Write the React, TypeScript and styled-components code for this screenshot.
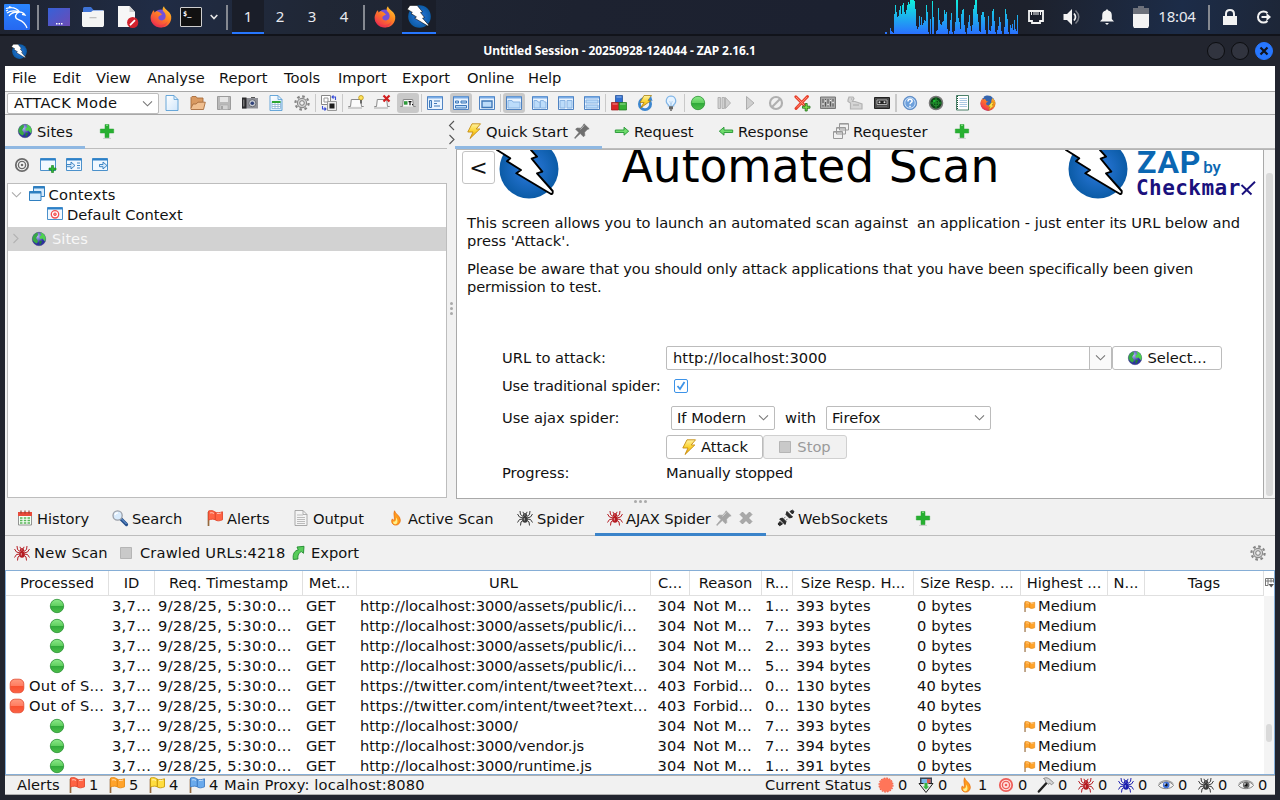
import React from "react";
import styled, { createGlobalStyle, css } from "styled-components";

const GlobalStyle = createGlobalStyle`
  * { box-sizing: border-box; }
  body { margin: 0; background: #22252f; overflow: hidden; }
  button { font: inherit; color: inherit; padding: 0; }
  svg { display: block; flex: none; overflow: visible; }
`;

const Desktop = styled.div`
  width: 1280px;
  height: 800px;
  display: flex;
  flex-direction: column;
  background: #22252f;
  font-family: "DejaVu Sans", sans-serif;
  font-size: 14.67px;
  color: #111;
  overflow: hidden;
  white-space: pre;
`;

/* ---------- icons ---------- */

type IconProps = { size?: number };
const Svg = ({ size = 16, box = 16, children }: { size?: number; box?: number; children: React.ReactNode }) => (
  <svg width={size} height={size} viewBox={`0 0 ${box} ${box}`} fill="none">
    {children}
  </svg>
);

const Defs = styled.svg`
  position: absolute;
  width: 0;
  height: 0;
`;

const Gradients = () => (
  <Defs aria-hidden>
    <defs>
      <linearGradient id="gKali" x1="0" y1="0" x2="0" y2="1"><stop offset="0" stopColor="#2a86ff" /><stop offset="1" stopColor="#2668f0" /></linearGradient>
      <linearGradient id="gDisp" x1="0" y1="0" x2="1" y2="1"><stop offset="0" stopColor="#3661d8" /><stop offset="1" stopColor="#6c4bb5" /></linearGradient>
      <radialGradient id="gZap"><stop offset="0" stopColor="#2d7be0" /><stop offset="1" stopColor="#0b5ba6" /></radialGradient>
      <linearGradient id="gFox" x1="1" y1="0" x2="0.3" y2="1"><stop offset="0" stopColor="#ffd83b" /><stop offset=".45" stopColor="#ff8a1f" /><stop offset="1" stopColor="#f0324f" /></linearGradient>
      <linearGradient id="gGreen" x1="0" y1="0" x2="0" y2="1"><stop offset="0" stopColor="#8ce98a" /><stop offset=".5" stopColor="#5fce5e" /><stop offset=".51" stopColor="#2fa93a" /><stop offset="1" stopColor="#4fc04c" /></linearGradient>
      <linearGradient id="gRed" x1="0" y1="0" x2="0" y2="1"><stop offset="0" stopColor="#ff9a80" /><stop offset=".5" stopColor="#ff7c60" /><stop offset=".51" stopColor="#f8502f" /><stop offset="1" stopColor="#fb6145" /></linearGradient>
      <linearGradient id="gBolt" x1="0" y1="0" x2="0" y2="1"><stop offset="0" stopColor="#fff3a0" /><stop offset=".5" stopColor="#fbd22e" /><stop offset="1" stopColor="#f0a500" /></linearGradient>
      <linearGradient id="gGraph" x1="0" y1="0" x2="0" y2="34" gradientUnits="userSpaceOnUse"><stop offset="0" stopColor="#0ff0dc" /><stop offset="1" stopColor="#2a70ff" /></linearGradient>
      <radialGradient id="gGlobe" cx=".4" cy=".3"><stop offset="0" stopColor="#b4b8f4" /><stop offset="1" stopColor="#2c2fa0" /></radialGradient>
      <linearGradient id="gPage" x1="0" y1="0" x2="1" y2="1"><stop offset="0" stopColor="#ffffff" /><stop offset="1" stopColor="#cfe6fb" /></linearGradient>
    </defs>
  </Defs>
);

const Globe = ({ size = 16 }: IconProps) => (
  <Svg size={size}>
    <circle cx="8" cy="8" r="6.700" fill="url(#gGlobe)" stroke="#4a4a86" strokeWidth=".6" />
    <path d="M1.500 7C2 4.600 4 2 6.500 1.600L7 4 5 7l2 3-1 2.500C3.500 12 1.300 9.500 1.500 7z" fill="#36a944" />
    <path d="M9 1.400c3 .2 5.500 2.600 5.700 6L14 10.500 11.500 7.500 9 8 8.500 5.500 10.500 4z" fill="#4fd250" />
    <path d="M8.500 9.500l2.500.5-1 3-1.500 1z" fill="#217a3a" />
  </Svg>
);
const Plus = () => (
  <Svg>
    <path d="M6 1.500h4V6h4.700v4H10v4.700H6V10H1.300V6H6z" fill="#27b030" stroke="#2ba135" strokeWidth=".5" />
    <path d="M7 2.300h2" stroke="#8ee58e" />
    <path d="M4 15.400h8" stroke="#bbb" strokeWidth=".7" />
  </Svg>
);
const Bolt = ({ size = 16 }: IconProps) => (
  <Svg size={size}>
    <path d="M6 .8h8.500L10.200 6h3.600L4 15.500 7 9H1.800z" fill="url(#gBolt)" stroke="#c58c12" strokeWidth=".9" strokeLinejoin="round" />
  </Svg>
);
const Pin = ({ tone }: { tone: string }) => (
  <Svg>
    <path d="M10 .8l5.200 5-2 .8-2.600 2.600.2 3.300-1.300 1.300L6.300 10.500 1 15.500l-.5-.6L5 9.500 1.600 6.300 3 5l3.500.2L9 2.800z" fill={tone} stroke={tone} strokeWidth=".6" />
    <path d="M10.200 2.500L6.500 6.500" stroke="#fff" strokeOpacity=".5" />
  </Svg>
);
const Cross = () => (
  <Svg>
    <path d="M2 4.500L4.500 2 8 5.500 11.500 2 14 4.500 10.500 8 14 11.500 11.500 14 8 10.500 4.500 14 2 11.500 5.500 8z" fill="#a9a9a9" stroke="#939393" strokeWidth=".7" />
  </Svg>
);
const Arrow = ({ left }: { left?: boolean }) => (
  <Svg>
    <path transform={left ? "translate(16 0) scale(-1 1)" : undefined} d="M1.300 7H10V4.200L14.700 8.200 10 12.200V9.500H1.300z" fill="#6fdc6c" stroke="#249433" strokeWidth=".9" strokeLinejoin="round" />
  </Svg>
);
const Windows = ({ gray }: { gray?: boolean }) => {
  const c = gray ? "#999" : "#2f7fc0";
  const f = gray ? "#f1f1f1" : "#d8ebfc";
  return (
    <Svg>
      {gray ? (
        <>
          <path d="M6.500.5h9v6.500h-9zM3.500 4.500h9V11h-9zM.5 8.500h9v7h-9z" fill={f} stroke={c} />
          <path d="M6.500 1.500h9M3.500 5.500h9M.5 9.500h9" stroke={c} strokeOpacity=".6" />
        </>
      ) : (
        <>
          <path d="M4.500.5h11v10h-11z" fill={f} stroke={c} />
          <path d="M4.500 1.500h11" stroke={c} strokeWidth="2" />
          <path d="M.5 5.500h11.500v9H.5z" fill={f} stroke={c} />
          <path d="M.5 6.500H12" stroke={c} strokeWidth="2" />
        </>
      )}
    </Svg>
  );
};
const Win = ({ kind }: { kind: "plus" | "in" | "out" | "target" }) => (
  <Svg>
    <path d="M.5 1.500h15v12H.5z" fill="#f1f8ff" stroke="#4b91cb" />
    <path d="M.5 2.500h15" stroke="#2c80c8" strokeWidth="2" />
    {kind === "plus" && <path d="M11.500 8.500h2v2.500H16v2h-2.500v2.500h-2V13H9v-2h2.500z" fill="#2db834" stroke="#13781c" strokeWidth=".6" />}
    {kind === "in" && <path d="M.5 7.500h4.500V5l4 3.500-4 3.500V9.700H.5zM11 6h3M11 8.500h3M11 11h3" fill="#d4e8fb" stroke="#2f7cbd" strokeWidth=".9" />}
    {kind === "out" && <path d="M7.500 7.500h3.500V5l4 3.500-4 3.500V9.700H7.500z" fill="#d4e8fb" stroke="#2f7cbd" strokeWidth=".9" />}
    {kind === "target" && (
      <>
        <circle cx="8" cy="8.300" r="3.700" fill="#fff" stroke="#f25050" strokeWidth="1.300" />
        <circle cx="8" cy="8.300" r="1.400" fill="#f77" stroke="#e84646" strokeWidth=".7" />
      </>
    )}
  </Svg>
);
const Target = ({ tone, fill = "#f6f6f6" }: { tone: string; fill?: string }) => (
  <Svg>
    <circle cx="8" cy="8" r="6.200" fill={fill} stroke={tone} strokeWidth="1.800" />
    <circle cx="8" cy="8" r="3.600" stroke={tone} strokeWidth="1.400" />
    <circle cx="8" cy="8" r="1.300" fill={tone} />
  </Svg>
);
const Page = ({ kind }: { kind?: "lines" | "sheet" | "note" }) => (
  <Svg>
    <path d={kind === "note" ? "M2.500.5h12v14.500h-12z" : "M2 .5h8l4 4V15.500H2z"} fill={kind === "lines" ? "#f4f4f4" : kind === "note" ? "#fff" : "url(#gPage)"} stroke={kind === "lines" ? "#a0a0a0" : kind === "note" ? "#39745a" : "#5a9fd6"} strokeWidth=".9" />
    {kind !== "note" && <path d="M10 .5v4h4" stroke={kind === "lines" ? "#a0a0a0" : "#5a9fd6"} strokeWidth=".8" />}
    {kind === "lines" && <path d="M4 5h6M4 7.500h8M4 9.500h8M4 11.500h8M4 13.500h8" stroke="#bbb" />}
    {kind === "note" && <path d="M5.500 3.500h7.500M5.500 5.500h7.500M5.500 7.500h7.500M5.500 9.500h7.500M5.500 11.500h7.500" stroke="#a9c8e2" />}
    {kind === "note" && <path d="M3.500 1v14" stroke="#1e5538" strokeDasharray="1 1" />}
    {kind === "sheet" && (
      <>
        <path d="M4 6.500h8.500v7H4z" fill="#fff" stroke="#7aa9d0" strokeWidth=".7" />
        <path d="M4 7h8.500" stroke="#2ea632" strokeWidth="2" />
        <path d="M4 9.500h8.500M4 11.500h8.500M7 8v5.500M10 8v5.500" stroke="#8fb4cf" strokeWidth=".8" />
      </>
    )}
  </Svg>
);
const FolderOpen = () => (
  <Svg>
    <path d="M1 13V2.500l1-1h4l1 1.500h6v4" fill="#d99a62" stroke="#a86d3d" strokeWidth=".9" />
    <path d="M.8 13.500L3 9h3l2-1.800h7.300L13.500 14.500H1z" fill="#f0bf90" stroke="#a86d3d" strokeWidth=".9" strokeLinejoin="round" />
  </Svg>
);
const Floppy = () => (
  <Svg>
    <path d="M1.500 1.500h13v13h-13z" fill="#b9b9b9" stroke="#9c9c9c" />
    <path d="M4 2h8v5H4z" fill="#e6e6e6" />
    <path d="M4 10h8v4.500H4z" fill="#d3d3d3" stroke="#aaa" strokeWidth=".6" />
    <path d="M6 11v3" stroke="#999" strokeWidth="1.600" />
  </Svg>
);
const Camera = () => (
  <Svg>
    <path d="M0 3h16v10.500H0z" fill="#8f9096" />
    <path d="M0 2.500h4.500v11H0z" fill="#2a2a2d" />
    <path d="M1.800 4.500v7" stroke="#999" />
    <path d="M9 2h4v1H9z" fill="#555" />
    <circle cx="10.300" cy="8.200" r="3.600" fill="#c9ccd2" stroke="#60636a" strokeWidth=".9" />
    <circle cx="10.300" cy="8.200" r="1.800" fill="#30427a" />
  </Svg>
);
const Gear = () => (
  <Svg>
    <circle cx="8" cy="8" r="6.600" stroke="#858585" strokeWidth="2.200" strokeDasharray="2.600 2.580" />
    <circle cx="8" cy="8" r="4.600" fill="#d4d4d4" stroke="#8a8a8a" strokeWidth="1.100" />
    <circle cx="8" cy="8" r="2.300" fill="#f1f1f1" stroke="#7d7d7d" />
  </Svg>
);
const Swap = () => (
  <Svg>
    <path d="M.5.500h9v9h-9z" fill="#fff" stroke="#888" />
    <path d="M3 3h4v4H3z" stroke="#999" />
    <path d="M6.500 6.500h9v9h-9z" fill="#ededed" stroke="#999" />
    <path d="M8.500 8.500h5v5h-5z" fill="#1c1c1c" />
    <path d="M14.500 5V2H11M12.500.5L11 2l1.500 1.500M1.500 11v3H5M3.500 12.500L5 14l-1.500 1.500" stroke="#3a4fd8" strokeWidth="1.100" />
  </Svg>
);
const Tab = ({ kind }: { kind: "bulb" | "x" | "text" }) => (
  <Svg>
    <path d="M.3 11.500H2.500L3.300 4.500h9.400l.8 7h2.200" stroke="#8a8a8a" fill="#fbfbfb" />
    {kind !== "text" && <path d="M0 13h14" stroke="#aaa" />}
    {kind === "bulb" && (
      <>
        <circle cx="13" cy="2.800" r="2.300" fill="#ffe25c" stroke="#b89312" strokeWidth=".8" />
        <path d="M13 5v3.500" stroke="#555" strokeWidth="1.600" />
      </>
    )}
    {kind === "x" && <path d="M9.500.500l6 6M15.500.500l-6 6" stroke="#d11f1f" strokeWidth="2.200" />}
    {kind === "text" && (
      <>
        <path d="M4 6.200h3.500v3.500H4z" fill="#2f9a3c" />
        <path d="M8.500 6.700h3M10 6.700V10.200M12 9.700h1" stroke="#111" strokeWidth="1.200" />
      </>
    )}
  </Svg>
);
const paneShapes: Record<string, string> = {
  side: "M2.500 5.500h2v7h-2zM7 6h6M7 8.500h3M7 11h6",
  stack: "M2.500 6h3v2h-3zM8 6h5.500v2H8zM2.500 10.500h11v2.500h-11z",
  full: "M3 6h10v6.500H3z",
  tab: "M2 5.500h4l1 1.500h7v6H2z",
  tabs: "M2 5.500h3l1 1.500h2v6H2zM8.500 5.500h3l1 1.500h1.500v6H8.500z",
  cols: "M2 5.500h5v7.500H2zM9 5.500h5v7.500H9z",
  rows: "M2 5h12v3H2zM2 10h12v3H2z",
};
const Pane = ({ kind }: { kind: string }) => (
  <Svg>
    <path d="M.5 1.500h15v13H.5z" fill="#e9f4ff" stroke="#4f83c2" />
    <path d="M1 2.500h14" stroke="#79abe4" strokeWidth="2" />
    <path d={paneShapes[kind]} fill="#bcdcfa" stroke={kind === "full" || kind === "stack" || kind === "side" ? "#3f78b8" : "#8ab4e2"} strokeWidth={kind === "full" ? 1.400 : 1} />
  </Svg>
);
const Blocks = () => (
  <Svg>
    <path d="M4.500.500h7v7h-7z" fill="#2f6fd0" stroke="#1a4890" strokeWidth=".7" />
    <path d="M.5 7.500h7v7.500h-7z" fill="#d92525" stroke="#961414" strokeWidth=".7" />
    <path d="M8 7.500h7.500v7.500H8z" fill="#35b035" stroke="#187418" strokeWidth=".7" />
    <path d="M1.500 9h5M9 9h5.500M5.500 2h5" stroke="#fff" strokeOpacity=".5" />
  </Svg>
);
const BoltSync = () => (
  <Svg>
    <circle cx="8" cy="9" r="5.600" stroke="#3b86cf" strokeWidth="2.800" />
    <path d="M7 .5h7.500L11 5.500h3L3.500 13 7 7.500H3z" fill="url(#gBolt)" stroke="#a98213" strokeWidth=".8" />
    <path d="M14 1l1.500 5-4-1z" fill="#3b86cf" />
  </Svg>
);
const Bulb = () => (
  <Svg>
    <path d="M8 1a4.800 4.800 0 0 0-2.700 8.700V11h5.400V9.700A4.800 4.800 0 0 0 8 1z" fill="#e6f3ff" stroke="#7fb4e6" strokeWidth="1.200" />
    <path d="M6.700 6L8 10l1.300-4" stroke="#9fc6ea" strokeWidth=".7" />
    <path d="M6 12h4M6 13.500h4M7 15.200h2" stroke="#666" strokeWidth="1.300" />
  </Svg>
);
const Ball = ({ red }: { red?: boolean }) => (
  <Svg>
    {red ? (
      <rect x="1.200" y="1.200" width="13.600" height="13.600" rx="4.600" fill="url(#gRed)" stroke="#e2482c" strokeWidth=".8" />
    ) : (
      <circle cx="8" cy="8" r="6.700" fill="url(#gGreen)" stroke="#2a9233" strokeWidth=".8" />
    )}
  </Svg>
);
const StepIcon = () => (
  <Svg>
    <path d="M2 2.500h2.500v11H2zM6 2.500h2.500v11H6zM9.500 2.500L14.500 8l-5 5.500z" fill="#d0d0d0" stroke="#a8a8a8" strokeWidth=".8" />
  </Svg>
);
const PlayIcon = () => (
  <Svg>
    <path d="M4.500 1.500L12 8l-7.500 6.500z" fill="#cfcfcf" stroke="#a8a8a8" strokeWidth=".9" />
  </Svg>
);
const NoIcon = () => (
  <Svg>
    <circle cx="8" cy="8" r="6" stroke="#b0b0b0" strokeWidth="2.200" />
    <path d="M4 12L12 4" stroke="#b0b0b0" strokeWidth="2.200" />
  </Svg>
);
const BreakAdd = () => (
  <Svg>
    <path d="M1.800 1.800l11 11M13.500 1.500L2 13.500" stroke="#e8402c" strokeWidth="3" strokeLinecap="round" />
    <path d="M2 2l10 10M13 2L3 12.500" stroke="#ff8c74" strokeWidth="1" />
    <path d="M11.200 8.500h2v2.700H16v2h-2.800V16h-2v-2.800H8.500v-2h2.700z" fill="#7be04c" stroke="#1b6e14" strokeWidth=".8" />
  </Svg>
);
const Mixer = () => (
  <Svg>
    <path d="M.5 2h15v11.500H.5z" fill="#a8a8a8" stroke="#777" />
    <path d="M3 4v7.500M5.500 4v7.500M8 4v7.500M10.500 4v7.500M13 4v7.500" stroke="#444" strokeWidth=".8" />
    <path d="M2.300 9h1.500M4.800 6h1.500M7.300 9.500h1.500M9.800 5.500h1.500M12.300 7.500h1.500" stroke="#f5f5f5" strokeWidth="1.400" />
  </Svg>
);
const Sheep = () => (
  <Svg>
    <path d="M1 5l1-3h4l1 1.500-1.500 3H8L15 9v5H3.500V8L1 6.500z" fill="#d5d5d5" stroke="#b3b3b3" strokeWidth="1.200" />
    <path d="M4 4h1M6 10h6" stroke="#a8a8a8" />
  </Svg>
);
const Cassette = () => (
  <Svg>
    <path d="M.5 2.500h15v11H.5z" fill="#4a4a4a" stroke="#222" />
    <path d="M3 5h10v4.500H3z" fill="#222" stroke="#bbb" strokeWidth=".9" />
    <circle cx="5.500" cy="7.200" r="1" fill="#ddd" />
    <circle cx="10.500" cy="7.200" r="1" fill="#ddd" />
    <path d="M3 11.500h10" stroke="#666" />
  </Svg>
);
const HelpIcon = () => (
  <Svg>
    <circle cx="8" cy="8" r="6.700" fill="#6da0dc" stroke="#4a78b5" strokeWidth=".7" />
    <circle cx="8" cy="8" r="5.200" stroke="#d4e5f8" strokeWidth=".9" />
    <path d="M6 6.400C6 5 7 4.300 8 4.300s2.100.6 2.100 1.900C10.100 7.500 8 7.600 8 9.300M8 10.800v1.400" stroke="#fff" strokeWidth="1.500" />
  </Svg>
);
const Radar = () => (
  <Svg>
    <circle cx="8" cy="8" r="6.500" fill="#0d4a18" stroke="#777" strokeWidth="1.600" />
    <path d="M8 2.500v11M2.500 8h11" stroke="#29a835" strokeWidth=".8" />
    <circle cx="8" cy="8" r="3" stroke="#29a835" strokeWidth=".7" />
    <circle cx="6.300" cy="6" r="1.300" fill="#1fbd32" />
  </Svg>
);
const Firefox = ({ size = 22, bolt }: { size?: number; bolt?: boolean }) => (
  <Svg size={size} box={22}>
    <circle cx="11" cy="11.500" r={bolt ? 10 : 8} fill={bolt ? "#3767b2" : "#7350d8"} />
    <path d="M1.500 8C2.300 6 3 5 4 4.300L4.500 6.500 6.800 5 9.500 6.300 12 8.500 9 10.300c-1 .8-.8 2.500.5 3.500 2 1.300 4.800.5 5.700-1.500C16.500 9.500 15 6.500 13 5c-.8-1.500-.3-3.500 1-4.800.3 2 1.500 2.800 3.500 4.500C20.500 7 21.700 9.500 21.200 13c-.8 5-5 8.500-10 8.500C5 21.500.5 17 .6 11.500c0-1.300.3-2.500.9-3.500z" fill="url(#gFox)" />
    <path d="M1 11c1 5 4.500 8 9 8 3.500 0 6-1.500 7.500-4-1 5-4.500 6.500-7.500 6.500C4.500 21.500.8 17 1 11z" fill="#e52f4d" fillOpacity=".45" />
    {bolt && <path d="M5 2.500c4-3 10-2 12 1l-2 6-6-1z" fill="#3565ae" />}
    {bolt && <path d="M16 10l-5 6h3l-2 5 8-7h-3.500l3-4z" fill="#ffe04a" stroke="#a87400" strokeWidth=".6" />}
  </Svg>
);
const Calendar = () => (
  <Svg>
    <path d="M1.500 3h13v12h-13z" fill="#f5fff5" stroke="#888" strokeWidth=".9" />
    <path d="M1 2h14v4H1z" fill="#e84b3b" />
    <path d="M4 .5v3M8 .5v3M12 .5v3" stroke="#8d3a2d" strokeWidth="1.100" />
    <path d="M3 8h2.500M6.800 8h2.500M10.500 8H13M3 10.500h2.500M6.800 10.500h2.500M10.500 10.500H13M3 13h2.500M6.800 13h2.500M10.500 13H13" stroke="#57b558" strokeWidth="1.600" />
  </Svg>
);
const Magnifier = () => (
  <Svg>
    <path d="M9 9l5.500 5.500" stroke="#244f8c" strokeWidth="3.200" strokeLinecap="round" />
    <path d="M9.500 9l5 5" stroke="#78a9e4" strokeWidth="1" />
    <circle cx="5.600" cy="5.500" r="4.600" fill="#d9ebfc" stroke="#9a9fa8" strokeWidth="1.300" />
    <path d="M3 5c.3-1.500 1.500-2.300 3-2.200" stroke="#fff" strokeWidth="1.300" />
  </Svg>
);
const flagTones = { red: ["#ff6344", "#e2492f"], orange: ["#ffa32b", "#e58a14"], yellow: ["#ffdd3f", "#c79a08"], blue: ["#6aaaec", "#3f7dc4"] };
const Flag = ({ tone, size = 16 }: { tone: keyof typeof flagTones; size?: number }) => (
  <Svg size={size}>
    <path d="M1.500 2v14" stroke="#94693c" strokeWidth="1.700" />
    <path d="M1.500 1C4 .3 6 .5 8 2c2 1.300 4 .8 7.500-.2v8C12.500 11 10.500 11.300 8.500 10c-2-1.300-4-1-7 0z" fill={flagTones[tone][0]} stroke={flagTones[tone][1]} strokeWidth=".9" />
    <path d="M8.300 2v8" stroke={flagTones[tone][1]} strokeWidth="1.200" />
    <path d="M3 3c1.500-.5 2.500-.4 4 .5M10 3.500c1.500.2 3-.1 4-.5" stroke="#fff" strokeOpacity=".6" />
  </Svg>
);
const Flame = () => (
  <Svg>
    <path d="M6.500.8C7 4 12.300 5.500 12.300 10.200c0 2.800-2 4.900-4.600 4.900-2.400 0-4-1.600-4-3.900 0-.9.200-1.700.7-2.300.3 1 .9 1.400 1.700 1.400C7.300 7.500 5 4.500 6.500.8z" fill="#ff9b1c" stroke="#e8700f" strokeWidth=".8" />
    <path d="M8.300 7.500c1.500 2 2 6.300-.8 6.700-1.700.2-2.700-1.200-2.200-2.700 2 .8 3-1.500 3-4z" fill="#fff08a" />
  </Svg>
);
const Spider = ({ tone }: { tone: string }) => (
  <Svg>
    <path d="M6 6.500L3.500 4.500 3 1M6 8L2.500 7 .5 4M6 9l-3.500.5L.5 12.500M6.500 10l-2.500 2-.5 3.500M10 6.500l2.500-2L13 1M10 8l3.500-1 2-3M10 9l3.500.5 2 3M9.500 10l2.500 2 .5 3.500" stroke={tone} strokeWidth="1" />
    <ellipse cx="8" cy="9.500" rx="2.700" ry="3.300" fill={tone} />
    <circle cx="8" cy="5.200" r="2.100" fill={tone} />
    <path d="M6.500 3.500L6 1.800M9.500 3.500l.5-1.700" stroke={tone} />
    <path d="M7.300 8v2.500M7.300 5h1" stroke="#fff" strokeOpacity=".55" />
  </Svg>
);
const Plugs = () => (
  <Svg>
    <path d="M9 1.500L14.500 7l-3 1L8 4.500zM12 1.500l2.500-1.300L16 1.500 14.500 4z" fill="#2d2d2d" stroke="#222" />
    <path d="M1.700 9L7 14.500l1-3L4.500 8zM2 11.500L0 14l1.500 1.700L4.500 14z" fill="#2d2d2d" stroke="#222" />
    <path d="M5.500 8.800l2-2M7.500 10.800l2-2" stroke="#777" />
  </Svg>
);
const StopIcon = () => (
  <Svg size={12} box={12}>
    <path d="M.5.500h11v11H.500z" fill="#c9c9c9" stroke="#b5b5b5" />
  </Svg>
);
const ExportIcon = () => (
  <Svg>
    <path d="M2.300 14.500C1.500 9 3.500 5.500 7.300 5L6 2l7-.7-.5 7L10.200 6.500C7 8.500 6.500 11.500 7 14z" fill="#58cc5a" stroke="#208a2f" strokeWidth=".9" strokeLinejoin="round" />
  </Svg>
);
const Burst = () => (
  <Svg>
    <circle cx="8" cy="8" r="6.900" stroke="#ee5a40" strokeWidth="1.200" strokeDasharray="1.800 .910" />
    <circle cx="8" cy="8" r="6.700" fill="#ff7559" />
  </Svg>
);
const Download = () => (
  <Svg>
    <path d="M2 .5h12V8H2z" fill="#3a4350" />
    <path d="M3.500 2h9v4.500h-9z" fill="#79b9ea" />
    <path d="M9 2h3.500v4.500H9z" fill="#dc5b4b" />
    <path d="M5.500 6.500H1L8 15.500 15 6.500h-4.500" fill="#e9e9e9" stroke="#222" />
    <path d="M6.500 6h3v3.500H11l-3 3-3-3h1.500z" fill="#36b53f" />
  </Svg>
);
const Hammer = () => (
  <Svg>
    <path d="M8.500 6L.8 14.500" stroke="#222" strokeWidth="2.400" strokeLinecap="round" />
    <path d="M5.500 1.500C8 0 10.500 1 12 2.500l3.700 3.300-2 2-2-1.500-1.500 1L7.500 4.500l-.5-2z" fill="#d5d5d5" stroke="#777" strokeWidth=".8" />
  </Svg>
);
const Eye = ({ tone }: { tone: string }) => (
  <Svg>
    <path d="M.5 8.500C3 4 12.500 3 15.500 8.500 12.500 12.500 4 13 .5 8.500z" fill="#f2f2f2" stroke="#777" strokeWidth=".9" />
    <circle cx="8.200" cy="8" r="3.300" fill={tone} />
    <circle cx="8.200" cy="8" r="1.400" fill="#111" />
    <circle cx="7" cy="7" r=".8" fill="#fff" />
    <path d="M.5 7C4 2.500 12 2.500 15.500 7" stroke="#8f8f8f" />
  </Svg>
);
const Chevron = ({ tone = "#777", dir = "down" }: { tone?: string; dir?: "down" | "left" | "right" }) => (
  <svg width="11" height="11" viewBox="0 0 11 11" fill="none">
    <path d={dir === "down" ? "M1 3.300L5.500 7.800 10 3.300" : dir === "left" ? "M8 1L3.500 5.500 8 10" : "M3.500 1L8 5.500 3.500 10"} stroke={tone} strokeWidth="1.100" />
  </svg>
);
const boltPath = "M5 1H24L32 11L38 17.700L32.700 19.700L43.300 32.700L38 34.300L53.700 52Q54 55.500 52 55L17.300 34.300L22 31L8 22.300L11.300 19.300L-2 11Z";
const ZapLogo = ({ size }: { size: number }) => (
  <svg width={size} height={size} viewBox="0 0 60 60">
    <circle cx="30" cy="30" r="29.500" fill="url(#gZap)" />
    <path d={boltPath} fill="#fff" stroke="#000" strokeWidth={size > 40 ? 1.900 : 1.500} strokeLinejoin="round" />
  </svg>
);

/* ---------- desktop panel ---------- */

const Panel = styled.header`
  height: 36px;
  flex: none;
  display: flex;
  align-items: center;
  background: linear-gradient(100deg, #1e2330 0%, #202c45 12%, #202735 25%, #1d2230 45%, #1c2130 65%, #1d212c 80%, #1c2c48 92%, #1d2637 100%);
  border-bottom: 2px solid #11131a;
  color: #e8eaef;
  font-family: "Noto Sans", sans-serif;
  font-size: 15px;
`;
const PanelSlot = styled.div<{ w: number }>`
  width: ${(p) => p.w}px;
  height: 34px;
  display: flex;
  align-items: center;
  justify-content: center;
  flex: none;
`;
const ClockSlot = styled(PanelSlot)`
  letter-spacing: -0.15px;
  padding-bottom: 2px;
`;
const PanelRule = styled.i`
  width: 2px;
  height: 25px;
  background: #858991;
  flex: none;
`;
const Workspace = styled(PanelSlot)<{ active?: boolean }>`
  padding-bottom: 2px;
  ${(p) => p.active && css`background: #1a1e29; border-bottom: 2px solid #2777ff; padding-bottom: 0;`}
`;
const PanelGap = styled.div`
  flex: 1;
`;

const Kali = () => (
  <svg width="26" height="26" viewBox="0 0 26 26" fill="none">
    <rect width="26" height="26" rx="1" fill="url(#gKali)" />
    <path d="M2 4.500C8 2.500 13 4.500 15.500 7.800M3 9c4-2.800 8-2.500 12.500-1M15.500 8c-4 1.500-5.500 5-2 7.200 3 1.300 7 1.500 9.500 8.800M15 7.800c3 .2 4.500.6 6 3.200l-3-.6M5 12c2-3 5-4.200 9-4M4 6l-2 1M7.500 3.700L5 2.500" stroke="#fff" strokeWidth="1.300" />
  </svg>
);
const DisplayIcon = () => (
  <svg width="22" height="18" viewBox="0 0 22 18">
    <path d="M0 0h22v18H0z" fill="url(#gDisp)" />
    <path d="M8 15h1.500v1.500H8zM10.500 15H12v1.500h-1.500zM13 15h1.500v1.500H13z" fill="#fff" />
  </svg>
);
const FilesIcon = () => (
  <svg width="22" height="20" viewBox="0 0 22 20">
    <path d="M1 4V1.500Q1 0 2.500 0H9l2.500 3H21v4H1z" fill="#3e73d6" />
    <path d="M0 5h9l2-1.500h11V18.500L21 20H1L0 18.500z" fill="#f4f4f4" />
    <path d="M7.500 10h7v1.300h-7z" fill="#c2c2c2" />
  </svg>
);
const DocIcon = () => (
  <svg width="22" height="22" viewBox="0 0 22 22">
    <path d="M1 0h11.500l5.500 6v15H1z" fill="#f7f7f7" />
    <path d="M12.500 0v6H18z" fill="#cfcfcf" />
    <circle cx="15.700" cy="16.500" r="5.600" fill="#d2222d" />
    <path d="M13 19.200l5-5" stroke="#fff" strokeWidth="1.700" />
  </svg>
);
const TerminalIcon = styled.span`
  width: 22px;
  height: 20px;
  background: #111;
  border: 1px solid #cfcfcf;
  border-radius: 1px;
  color: #fff;
  font: bold 7px/12px "DejaVu Sans Mono", monospace;
  padding-left: 2px;
`;
const graphBars = [2, 2, 0, 0, 0, 6, 3, 2, 1, 20, 29, 22, 17, 18, 24, 28, 20, 29, 31, 22, 20, 24, 29, 32, 30, 34, 34, 34, 34, 33, 25, 8, 5, 7, 18, 9, 17, 9, 11, 14, 13, 29, 22, 2, 0, 15, 0, 33, 17, 0, 0, 3, 4, 26, 14, 10, 9, 12, 13, 24, 20, 22, 5, 0, 3, 14, 21, 2, 0, 3, 12, 34, 34, 16, 12, 5, 20, 24, 25, 9, 2, 0, 6, 12, 19, 8, 3, 9, 25, 29, 34, 34, 20, 12, 3, 2, 19, 22, 22, 17, 4, 0, 0, 18, 4, 3, 8, 23, 25, 13, 2, 0, 4, 8, 17, 12, 3, 0, 0, 7, 25, 20, 15, 2, 0, 9, 6, 10, 4, 14, 5, 3, 19];
const Graph = () => (
  <svg width="133" height="34" viewBox="0 0 133 34">
    {graphBars.map((h, i) => (
      <rect key={i} x={i} y={34 - h} width="1" height={h} fill="url(#gGraph)" />
    ))}
  </svg>
);

const TopPanel = () => (
  <Panel>
    <PanelSlot w={34}><Kali /></PanelSlot>
    <PanelSlot w={8}><PanelRule /></PanelSlot>
    <PanelSlot w={34}><DisplayIcon /></PanelSlot>
    <PanelSlot w={34}><FilesIcon /></PanelSlot>
    <PanelSlot w={36}><DocIcon /></PanelSlot>
    <PanelSlot w={30}><Firefox /></PanelSlot>
    <PanelSlot w={30}><TerminalIcon>$_</TerminalIcon></PanelSlot>
    <PanelSlot w={16}>
      <svg width="8" height="6" viewBox="0 0 8 6" fill="none"><path d="M.7 1L4 4.500 7.300 1" stroke="#e6e6e6" strokeWidth="1.600" /></svg>
    </PanelSlot>
    <PanelSlot w={10}><PanelRule /></PanelSlot>
    {["1", "2", "3", "4"].map((n, i) => (
      <Workspace key={n} w={32} active={i === 0}>{n}</Workspace>
    ))}
    <PanelSlot w={8}><PanelRule /></PanelSlot>
    <PanelSlot w={34}><Firefox /></PanelSlot>
    <Workspace w={34} active><ZapLogo size={23} /></Workspace>
    <PanelGap />
    <Graph />
    <PanelSlot w={36}>
      <svg width="16" height="15" viewBox="0 0 16 15" fill="none"><path d="M1 1h14v10h-3v2H4v-2H1z" stroke="#f3f3f3" strokeWidth="1.800" /><path d="M3.500 1v4M6 1v4M8 1v4M10 1v4M12.500 1v4" stroke="#f3f3f3" /></svg>
    </PanelSlot>
    <PanelSlot w={35}>
      <svg width="18" height="16" viewBox="0 0 18 16" fill="none"><path d="M.5 5H4l5-5v16l-5-5H.5z" fill="#f3f3f3" /><path d="M11 4.500q3 3.500 0 7" stroke="#f3f3f3" strokeWidth="1.700" /><path d="M12.500 1.500q6.500 6.500 0 13" stroke="#777b84" strokeWidth="1.500" /></svg>
    </PanelSlot>
    <PanelSlot w={35}>
      <svg width="14" height="16" viewBox="0 0 14 16"><path d="M7 0l1.300 1.500C11 2 11.800 4 11.800 6.500V10l2.200 2.500H0L2.200 10V6.500C2.200 4 3 2 5.700 1.500zM5 14h4l-2 2z" fill="#f3f3f3" /></svg>
    </PanelSlot>
    <PanelSlot w={33}>
      <svg width="16" height="22" viewBox="0 0 16 22"><path d="M0 2h5V0h6v2h5v6H0z" fill="#6d717b" /><path d="M0 8h16v12l-1 2H1l-1-2z" fill="#f3f3f3" /></svg>
    </PanelSlot>
    <ClockSlot w={40}>18:04</ClockSlot>
    <PanelSlot w={8} />
    <PanelSlot w={8}><PanelRule /></PanelSlot>
    <PanelSlot w={34}>
      <svg width="14" height="16" viewBox="0 0 14 16"><path d="M0 7h14v9H0z" fill="#f3f3f3" /><path d="M3 7.500V5q0-4 4-4t4 4v2.500" fill="none" stroke="#f3f3f3" strokeWidth="2" /></svg>
    </PanelSlot>
    <PanelSlot w={33}>
      <svg width="16" height="14" viewBox="0 0 16 14" fill="none"><path d="M11.500 3A5.600 5.600 0 1 0 11.500 11" stroke="#f3f3f3" strokeWidth="2" /><path d="M5.500 7H12" stroke="#f3f3f3" strokeWidth="2" /><path d="M10.500 3L15 7l-4.500 4z" fill="#f3f3f3" /></svg>
    </PanelSlot>
  </Panel>
);

/* ---------- window ---------- */

const TitleBar = styled.div`
  height: 30px;
  flex: none;
  display: grid;
  grid-template-columns: 154px 1fr 200px;
  align-items: center;
  padding: 0 7px 0 12px;
  background: #22252f;
  color: #fff;
  font: bold 12px/30px "Noto Sans", sans-serif;
  letter-spacing: -0.1px;
  text-align: center;
`;
const WindowButtons = styled.div`
  display: flex;
  justify-content: flex-end;
  gap: 6px;
`;
const WindowButton = styled.span<{ close?: boolean }>`
  width: 18px;
  height: 18px;
  border-radius: 50%;
  border: 1px solid ${(p) => (p.close ? "#2777ff" : "#0c0d10")};
  background: ${(p) => (p.close ? "#2777ff" : "#31343f")};
  display: grid;
  place-items: center;
`;
const AppFrame = styled.main`
  width: 1270px;
  height: 729px;
  margin-left: 5px;
  display: flex;
  flex-direction: column;
  background: #f1f1f1;
  flex: none;
`;
const MenuBar = styled.nav`
  height: 25px;
  background: #fff;
  display: flex;
  align-items: center;
  padding: 0 0 2px 7px;
  flex: none;
`;
const MenuItem = styled.span<{ w: number }>`
  width: ${(p) => p.w}px;
  line-height: 23px;
`;
const ToolBar = styled.div`
  height: 24px;
  border-top: 1px solid #a8a8a8;
  border-bottom: 1px solid #a8a8a8;
  display: flex;
  align-items: center;
  padding-left: 2px;
  flex: none;
`;
const Slot = styled.span<{ pressed?: boolean; w?: number }>`
  width: ${(p) => p.w ?? 26}px;
  height: 20px;
  display: flex;
  align-items: center;
  justify-content: center;
  flex: none;
  ${(p) => p.pressed && css`background: #c9c9c9; border-radius: 3px; width: 22px; margin: 0 2px;`}
`;
const Rule = styled.i<{ w?: number }>`
  width: ${(p) => p.w ?? 1}px;
  height: 18px;
  background: #c9c9c9;
  flex: none;
`;
const Combo = styled.div<{ w: number; h?: number; pad?: number }>`
  width: ${(p) => p.w}px;
  height: ${(p) => p.h ?? 24}px;
  border: 1px solid #bcbcbc;
  border-radius: 2px;
  background: #fff;
  display: flex;
  align-items: center;
  justify-content: space-between;
  padding: 0 5px 0 ${(p) => p.pad ?? 5}px;
  flex: none;
`;
const ModeText = styled.span`
  letter-spacing: 0.35px;
  margin-top: -2px;
`;
const WorkArea = styled.div`
  height: 384px;
  display: flex;
  flex: none;
`;
const Left = styled.section`
  width: 442px;
  display: flex;
  flex-direction: column;
`;
const TabStrip = styled.div<{ h: number }>`
  height: ${(p) => p.h}px;
  display: flex;
  flex: none;
  box-shadow: inset 0 -1px #bdbdbd;
`;
const TabItem = styled.div<{ w: number; tone?: string; pad: number; gap?: number }>`
  width: ${(p) => p.w}px;
  padding-left: ${(p) => p.pad}px;
  padding-top: 1px;
  display: flex;
  align-items: center;
  gap: ${(p) => p.gap ?? 4}px;
  flex: none;
  border-bottom: 3px solid ${(p) => p.tone ?? "transparent"};
`;
const LeftTools = styled.div`
  height: 34px;
  padding: 0 0 2px 4px;
  display: flex;
  align-items: center;
`;
const Tree = styled.div`
  height: 315px;
  margin-left: 2px;
  width: 440px;
  border: 1px solid #bdbdbd;
  background: #fff;
`;
const TreeRow = styled.div<{ pad: number; h: number; selected?: boolean; gap?: number }>`
  height: ${(p) => p.h}px;
  padding-left: ${(p) => p.pad}px;
  display: flex;
  align-items: center;
  gap: ${(p) => p.gap ?? 4}px;
  ${(p) => p.selected && css`margin-top: 3px; padding-bottom: 1px; background: #d2d2d2; color: #f7f7f7;`}
`;
const Splitter = styled.div`
  width: 8px;
  display: flex;
  flex-direction: column;
  align-items: center;
  padding-top: 5px;
  color: #555;
`;
const ArrowSlot = styled.span`
  margin-top: 3px;
`;
const Grip = styled.div<{ row?: boolean }>`
  display: flex;
  flex-direction: ${(p) => (p.row ? "row" : "column")};
  gap: 2px;
  margin-top: ${(p) => (p.row ? 1 : 157)}px;
  i { width: 3px; height: 3px; border-radius: 50%; background: #aaa; }
`;
const Right = styled.section`
  width: 820px;
  display: flex;
  flex-direction: column;
`;
const ScrollArea = styled.div`
  height: 350px;
  display: flex;
  border-left: 1px solid #a9a9a9;
  border-top: 1px solid #b5b5b5;
  border-bottom: 1px solid #a9a9a9;
  margin-left: 1px;
`;
const Sheet = styled.div`
  width: 807px;
  background: #fff;
  border-right: 1px solid #a9a9a9;
  overflow: hidden;
  padding-left: 6px;
`;
const ScrollBar = styled.div<{ top: number; h: number }>`
  flex: 1;
  background: #f4f4f4;
  padding: ${(p) => p.top}px 2px 0;
  &::before {
    content: "";
    display: block;
    height: ${(p) => p.h}px;
    border-radius: 3px;
    background: #dadada;
  }
`;
const Hero = styled.div`
  height: 49px;
  margin-left: -1px;
  display: flex;
  align-items: flex-end;
`;
const BackButton = styled.button`
  width: 33px;
  height: 33px;
  margin: 0 4px 15px 0;
  border: 1px solid #c4c4c4;
  border-radius: 3px;
  background: #fff;
  font-size: 22px;
  line-height: 28px;
`;
const HeroTitle = styled.h1`
  width: 509px;
  margin: 0;
  font-size: 45.500px;
  line-height: 34px;
  font-weight: 400;
  text-align: center;
  color: #000;
  padding: 0 6px 15px 0;
`;
const Brand = styled.div`
  margin-left: 9px;
  height: 49px;
  display: flex;
  flex-direction: column;
  color: #0b67b2;
  font: bold 32px/24px Roboto, sans-serif;
  letter-spacing: 0.8px;
  small { font-size: 17px; margin-left: 2px; font-weight: 500; letter-spacing: 0; }
`;
const BrandSub = styled.span`
  display: flex;
  align-items: center;
  font: bold 21px/20px "DejaVu Sans Mono", monospace;
  letter-spacing: 0.45px;
  color: #1a117d;
  margin: -1px 0 0 -1px;
`;
const Para = styled.p<{ ls: number }>`
  margin: 0 0 10px 4px;
  line-height: 18px;
  letter-spacing: ${(p) => p.ls}px;
`;
const Intro = styled.div`
  padding-top: 15px;
`;
const Form = styled.div`
  margin: 48px 0 0 39px;
  display: grid;
  grid-template-columns: 164px 1fr;
  grid-template-rows: 26px 30px 34px 24px 28px;
  align-items: center;
`;
const Line = styled.div`
  display: flex;
  align-items: center;
  padding-top: 1px;
`;
const UrlField = styled.div`
  width: 446px;
  height: 24px;
  border: 1px solid #bcbcbc;
  border-radius: 2px;
  display: grid;
  grid-template-columns: 1fr 22px;
  align-items: center;
  padding-left: 6px;
  letter-spacing: 0.05px;
  span:last-child { height: 22px; border-left: 1px solid #bcbcbc; display: grid; place-items: center; background: #fafafa; }
`;
const Button = styled.button<{ w: number; off?: boolean }>`
  width: ${(p) => p.w}px;
  height: 24px;
  border: 1px solid ${(p) => (p.off ? "#d0d0d0" : "#bcbcbc")};
  border-radius: 3px;
  background: ${(p) => (p.off ? "#f1f1f1" : "#fff")};
  color: ${(p) => (p.off ? "#9a9a9a" : "#111")};
  display: flex;
  align-items: center;
  justify-content: center;
  gap: ${(p) => (p.off ? 6 : 4)}px;
`;
const Check = styled.span`
  width: 14px;
  height: 14px;
  margin-left: 8px;
  border: 1px solid #3d93e8;
  border-radius: 2px;
`;

const BottomGrip = styled.div`
  height: 3px;
  display: flex;
  justify-content: center;
  flex: none;
`;
const ScanTools = styled.div`
  height: 34px;
  display: flex;
  align-items: center;
  padding: 0 9px 1px;
  gap: 4px;
  flex: none;
`;
const Label = styled.span<{ w?: number; ls?: number }>`
  ${(p) => p.w && css`width: ${p.w}px;`}
  letter-spacing: ${(p) => p.ls ?? 0}px;
  flex: none;
`;
const Table = styled.div`
  height: 205px;
  border: 1px solid #86aed6;
  background: #fff;
  overflow: hidden;
  display: flex;
  flex: none;
`;
const columns = "103px 46px 148px 54px 294px 39px 72px 31px 121px 107px 87px 37px 119px";
const Rows = styled.div`
  width: 1258px;
  flex: none;
`;
const HeadRow = styled.div`
  display: grid;
  grid-template-columns: ${columns};
  height: 25px;
  border-bottom: 1px solid #e0e0e0;
  text-align: center;
  line-height: 24px;
  span { border-right: 1px solid #e0e0e0; }
`;
const Row = styled.div`
  display: grid;
  grid-template-columns: ${columns};
  height: 20px;
  line-height: 20px;
`;
const Cell = styled.span<{ align?: string; gap?: number; ls?: number; right?: number }>`
  padding: 0 ${(p) => p.right ?? 3}px 0 3px;
  display: flex;
  align-items: center;
  gap: ${(p) => p.gap ?? 4}px;
  justify-content: ${(p) => p.align ?? "flex-start"};
  letter-spacing: ${(p) => p.ls ?? 0}px;
`;
const SideRail = styled.div`
  flex: 1;
  display: flex;
  flex-direction: column;
`;
const RailCorner = styled.div`
  height: 25px;
  padding: 7px 0 0 1px;
`;
const StatusBar = styled.footer`
  height: 20px;
  display: flex;
  align-items: center;
  border-top: 1px solid #b0b0b0;
  border-bottom: 1px solid #b0b0b0;
  padding: 0 6px 1px 12px;
  flex: none;
`;
const StatusItem = styled.span<{ w: number }>`
  width: ${(p) => p.w}px;
  display: flex;
  align-items: center;
  gap: 4px;
  flex: none;
`;
const Spacer = styled.span`
  flex: 1;
`;

const menus: [string, number][] = [["File", 40.500], ["Edit", 43.500], ["View", 51], ["Analyse", 72], ["Report", 65], ["Tools", 54], ["Import", 64], ["Export", 65], ["Online", 61], ["Help", 40]];

const rows = [
  ["", "http://localhost:3000/assets/public/i...", "304", "Not M...", "1...", "393 bytes", "0 bytes", "Medium"],
  ["", "http://localhost:3000/assets/public/i...", "304", "Not M...", "7...", "393 bytes", "0 bytes", "Medium"],
  ["", "http://localhost:3000/assets/public/i...", "304", "Not M...", "2...", "393 bytes", "0 bytes", "Medium"],
  ["", "http://localhost:3000/assets/public/i...", "304", "Not M...", "5...", "394 bytes", "0 bytes", "Medium"],
  ["Out of S...", "https://twitter.com/intent/tweet?text...", "403", "Forbid...", "0...", "130 bytes", "40 bytes", ""],
  ["Out of S...", "https://twitter.com/intent/tweet?text...", "403", "Forbid...", "0...", "130 bytes", "40 bytes", ""],
  ["", "http://localhost:3000/", "304", "Not M...", "7...", "393 bytes", "0 bytes", "Medium"],
  ["", "http://localhost:3000/vendor.js", "304", "Not M...", "7...", "394 bytes", "0 bytes", "Medium"],
  ["", "http://localhost:3000/runtime.js", "304", "Not M...", "1...", "391 bytes", "0 bytes", "Medium"],
];
const heads = ["Processed", "ID", "Req. Timestamp", "Met...", "URL", "C...", "Reason", "R...", "Size Resp. H...", "Size Resp. ...", "Highest ...", "N...", "Tags"];

const statusItems: [React.ReactNode, string, number][] = [
  [<Burst />, "0", 40], [<Download />, "0", 40], [<Flame />, "1", 40], [<Target tone="#ee5f5a" fill="#ffe3e0" />, "0", 40], [<Hammer />, "0", 40],
  [<Spider tone="#b51c22" />, "0", 40], [<Spider tone="#1c1fae" />, "0", 40], [<Eye tone="#3e6fd8" />, "0", 40], [<Spider tone="#3c3c3c" />, "0", 40], [<Eye tone="#666" />, "0", 31],
];

const MainToolBar = () => (
  <ToolBar>
    <Combo w={152} h={21} pad={6}><ModeText>ATTACK Mode</ModeText><Chevron /></Combo>
    <Slot><Page /></Slot><Slot><FolderOpen /></Slot><Slot><Floppy /></Slot><Slot><Camera /></Slot><Slot><Page kind="sheet" /></Slot><Slot><Gear /></Slot>
    <Rule />
    <Slot><Swap /></Slot>
    <Rule />
    <Slot><Tab kind="bulb" /></Slot><Slot><Tab kind="x" /></Slot><Slot pressed><Tab kind="text" /></Slot>
    <Rule />
    <Slot><Pane kind="side" /></Slot><Slot pressed><Pane kind="stack" /></Slot><Slot><Pane kind="full" /></Slot>
    <Rule />
    <Slot pressed><Pane kind="tab" /></Slot><Slot><Pane kind="tabs" /></Slot><Slot><Pane kind="cols" /></Slot><Slot><Pane kind="rows" /></Slot>
    <Rule />
    <Slot><Blocks /></Slot><Slot><BoltSync /></Slot><Slot><Bulb /></Slot>
    <Rule />
    <Slot><Ball /></Slot><Slot><StepIcon /></Slot><Slot><PlayIcon /></Slot><Slot><NoIcon /></Slot><Slot><BreakAdd /></Slot><Slot><Mixer /></Slot><Slot w={27}><Sheep /></Slot><Slot w={27}><Cassette /></Slot>
    <Rule w={2} />
    <Slot><HelpIcon /></Slot><Slot><Radar /></Slot><Slot><Page kind="note" /></Slot><Slot><Firefox size={16} bolt /></Slot>
  </ToolBar>
);

const SitesPane = () => (
  <Left>
    <TabStrip h={34}>
      <TabItem w={80} pad={12} tone="#8fb8e2"><Globe />Sites</TabItem>
      <TabItem w={40} pad={14}><Plus /></TabItem>
    </TabStrip>
    <LeftTools>
      <Slot><Target tone="#6b6b6b" /></Slot><Slot><Win kind="plus" /></Slot><Slot><Win kind="in" /></Slot><Slot><Win kind="out" /></Slot>
    </LeftTools>
    <Tree>
      <TreeRow pad={3} h={20} gap={3.500}><Chevron tone="#aaa" /><Slot w={0} /><Windows /><Label ls={0.25}>Contexts</Label></TreeRow>
      <TreeRow pad={39} h={20}><Win kind="target" />Default Context</TreeRow>
      <TreeRow pad={2} h={24} selected gap={5}><Chevron tone="#b3b3b3" dir="right" /><Slot w={0} /><Globe />Sites</TreeRow>
    </Tree>
  </Left>
);

const QuickStart = () => (
  <Right>
    <TabStrip h={34}>
      <TabItem w={147} pad={11} tone="#8fb8e2"><Bolt />Quick Start<Slot w={20}><Pin tone="#6f6f6f" /></Slot></TabItem>
      <TabItem w={104} pad={12}><Arrow />Request</TabItem>
      <TabItem w={115} pad={12}><Arrow left />Response</TabItem>
      <TabItem w={121} pad={12}><Windows gray />Requester</TabItem>
      <TabItem w={40} pad={12}><Plus /></TabItem>
    </TabStrip>
    <ScrollArea>
      <Sheet>
        <Hero>
          <BackButton>&lt;</BackButton>
          <ZapLogo size={60} />
          <HeroTitle>Automated Scan</HeroTitle>
          <ZapLogo size={60} />
          <Brand>
            <span>ZAP<small>by</small></span>
            <BrandSub>
              Checkmar
              <svg width="15" height="14" viewBox="0 0 15 14" fill="none"><path d="M.5 4L10.500 13.500M14 .8L1 13.500" stroke="#1a117d" strokeWidth="1.900" /></svg>
            </BrandSub>
          </Brand>
        </Hero>
        <Intro>
          <Para ls={-0.045}>This screen allows you to launch an automated scan against  an application - just enter its URL below and{"\n"}press 'Attack'.</Para>
          <Para ls={-0.125}>Please be aware that you should only attack applications that you have been specifically been given{"\n"}permission to test.</Para>
        </Intro>
        <Form>
          <span>URL to attack:</span>
          <Line>
            <UrlField><span>http://localhost:3000</span><span><Chevron /></span></UrlField>
            <Button w={110}><Globe />Select...</Button>
          </Line>
          <Label ls={-0.15}>Use traditional spider:</Label>
          <Line>
            <Check><svg width="12" height="12" viewBox="0 0 12 12" fill="none"><path d="M2.500 6l2.500 3 4.500-7" stroke="#3d93e8" strokeWidth="1.800" /></svg></Check>
          </Line>
          <span>Use ajax spider:</span>
          <Line>
            <Slot w={5} /><Combo w={104}>If Modern<Chevron /></Combo><Slot w={51}>with</Slot><Combo w={165}>Firefox<Chevron /></Combo>
          </Line>
          <span />
          <Line><Button w={97}><Bolt />Attack</Button><Button w={84} off><StopIcon />Stop</Button></Line>
          <span>Progress:</span>
          <Label ls={-0.19}>Manually stopped</Label>
        </Form>
      </Sheet>
      <ScrollBar top={23} h={323} />
    </ScrollArea>
  </Right>
);

export default function App() {
  return (
    <Desktop>
      <GlobalStyle />
      <Gradients />
      <TopPanel />
      <TitleBar>
        <ZapLogo size={15} />
        <span>Untitled Session - 20250928-124044 - ZAP 2.16.1</span>
        <WindowButtons>
          <WindowButton /><WindowButton />
          <WindowButton close><svg width="8" height="8" viewBox="0 0 8 8"><path d="M.5.500l7 7M7.500.500l-7 7" stroke="#10131c" strokeWidth="2.200" /></svg></WindowButton>
        </WindowButtons>
      </TitleBar>
      <AppFrame>
        <MenuBar>{menus.map(([t, w]) => <MenuItem key={t} w={w}>{t}</MenuItem>)}</MenuBar>
        <MainToolBar />
        <WorkArea>
          <SitesPane />
          <Splitter>
            <Chevron tone="#555" dir="left" /><ArrowSlot><Chevron tone="#555" dir="right" /></ArrowSlot>
            <Grip><i /><i /><i /></Grip>
          </Splitter>
          <QuickStart />
        </WorkArea>
        <BottomGrip><Grip row><i /><i /><i /></Grip></BottomGrip>
        <TabStrip h={34}>
          <TabItem w={95} pad={12}><Calendar />History</TabItem>
          <TabItem w={95} pad={12}><Magnifier />Search</TabItem>
          <TabItem w={86} pad={12}><Flag tone="red" />Alerts</TabItem>
          <TabItem w={95} pad={12}><Page kind="lines" />Output</TabItem>
          <TabItem w={129} pad={12}><Flame />Active Scan</TabItem>
          <TabItem w={90} pad={12}><Spider tone="#3c3c3c" />Spider</TabItem>
          <TabItem w={171} pad={12} tone="#3b84ca" gap={3}><Spider tone="#b51c22" /><Label ls={-0.1}>AJAX Spider</Label><Slot w={21}><Pin tone="#a5a5a5" /></Slot><Cross /></TabItem>
          <TabItem w={137} pad={12}><Plugs /><Label ls={0.15}>WebSockets</Label></TabItem>
          <TabItem w={40} pad={12}><Plus /></TabItem>
        </TabStrip>
        <ScanTools>
          <Spider tone="#b51c22" /><Label w={82} ls={0.2}>New Scan</Label>
          <StopIcon /><Slot w={0} /><Label w={147} ls={0.13}>Crawled URLs:4218</Label>
          <ExportIcon /><Label>Export</Label>
          <Spacer /><Gear />
        </ScanTools>
        <Table>
          <Rows>
            <HeadRow>{heads.map((h) => <span key={h}>{h}</span>)}</HeadRow>
            {rows.map((r, i) => (
              <Row key={i}>
                <Cell align={r[0] ? undefined : "center"} right={r[0] ? 3 : 5} ls={0.15}>{r[0] ? <><Ball red />{r[0]}</> : <Ball />}</Cell>
                <Cell ls={0.3}>3,7...</Cell>
                <Cell ls={0.38}>9/28/25, 5:30:0...</Cell>
                <Cell>GET</Cell>
                <Cell ls={r[0] ? 0.17 : 0}>{r[1]}</Cell>
                <Cell align="flex-end" ls={0.2} right={4}>{r[2]}</Cell>
                <Cell ls={r[0] ? 0 : 0.25}>{r[3]}</Cell>
                <Cell ls={0.3}>{r[4]}</Cell>
                <Cell ls={0.2}>{r[5]}</Cell>
                <Cell ls={0.1}>{r[6]}</Cell>
                <Cell gap={3}>{r[7] && <><Flag tone="orange" size={11} />{r[7]}</>}</Cell>
                <Cell /><Cell />
              </Row>
            ))}
          </Rows>
          <SideRail>
            <RailCorner>
              <svg width="9" height="10" viewBox="0 0 9 10" fill="none"><path d="M.5 7.500V.5h8v4M.5 3h8M3 .5v7M6 .5v4M0 7.500h3" stroke="#777" /><path d="M3.500 6h5.500L6.200 9.500z" fill="#555" /></svg>
            </RailCorner>
            <ScrollBar top={128} h={18} />
          </SideRail>
        </Table>
        <StatusBar>
          <Label w={52}>Alerts</Label>
          <StatusItem w={40}><Flag tone="red" />1</StatusItem>
          <StatusItem w={40}><Flag tone="orange" />5</StatusItem>
          <StatusItem w={40}><Flag tone="yellow" />4</StatusItem>
          <StatusItem w={35}><Flag tone="blue" />4</StatusItem>
          <Label ls={0.17}>Main Proxy: localhost:8080</Label>
          <Spacer />
          <Label w={113}>Current Status</Label>
          {statusItems.map(([icon, n, w], i) => <StatusItem key={i} w={w}>{icon}{n}</StatusItem>)}
        </StatusBar>
      </AppFrame>
    </Desktop>
  );
}
